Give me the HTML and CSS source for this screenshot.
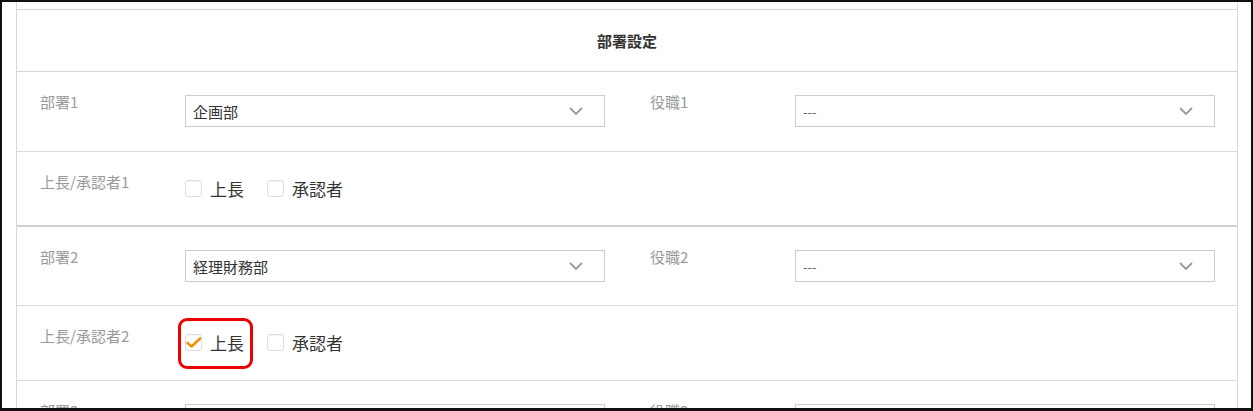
FILE: index.html
```html
<!DOCTYPE html>
<html lang="ja">
<head>
    <meta charset="UTF-8">
    <meta name="viewport" content="width=device-width, initial-scale=1.0">
    <title>部署設定</title>
    <link rel="stylesheet" href="styles.css">
</head>
<body>

    <div class="frame">
        <div class="panel">
            <div class="settings">
                <div class="settings-header">部署設定</div>

                <!-- 部署1 -->
                <div class="row">
                    <div class="pair">
                        <div class="field-label">部署1</div>
                        <div class="select">
                            <span>企画部</span>
                            <svg class="chevron" width="14" height="8" viewBox="0 0 14 8"><polyline points="1,1 7,7 13,1" /></svg>
                        </div>
                    </div>
                    <div class="pair">
                        <div class="field-label">役職1</div>
                        <div class="select">
                            <span class="empty">---</span>
                            <svg class="chevron" width="14" height="8" viewBox="0 0 14 8"><polyline points="1,1 7,7 13,1" /></svg>
                        </div>
                    </div>
                </div>
                <div class="row row-checks group-end">
                    <div class="field-label">上長/承認者1</div>
                    <div class="checks">
                        <label class="check"><span class="box"></span>上長</label>
                        <label class="check"><span class="box"></span>承認者</label>
                    </div>
                </div>

                <!-- 部署2 -->
                <div class="row">
                    <div class="pair">
                        <div class="field-label">部署2</div>
                        <div class="select">
                            <span>経理財務部</span>
                            <svg class="chevron" width="14" height="8" viewBox="0 0 14 8"><polyline points="1,1 7,7 13,1" /></svg>
                        </div>
                    </div>
                    <div class="pair">
                        <div class="field-label">役職2</div>
                        <div class="select">
                            <span class="empty">---</span>
                            <svg class="chevron" width="14" height="8" viewBox="0 0 14 8"><polyline points="1,1 7,7 13,1" /></svg>
                        </div>
                    </div>
                </div>
                <div class="row row-checks">
                    <div class="field-label">上長/承認者2</div>
                    <div class="checks">
                        <label class="check marked">
                            <span class="box checked">
                                <svg width="17" height="17" viewBox="0 0 17 17"><polyline points="2.5,9 6.5,12.5 15,4.5" /></svg>
                            </span>上長
                        </label>
                        <label class="check"><span class="box"></span>承認者</label>
                    </div>
                </div>

                <!-- 部署3 -->
                <div class="row">
                    <div class="pair">
                        <div class="field-label">部署3</div>
                        <div class="select">
                            <span></span>
                        </div>
                    </div>
                    <div class="pair">
                        <div class="field-label">役職3</div>
                        <div class="select">
                            <span></span>
                        </div>
                    </div>
                </div>
            </div>
        </div>
    </div>

</body>
</html>
```

FILE: styles.css
```css
    body {
        font-family: "Noto Sans CJK JP", "Noto Sans", sans-serif;
        margin: 0;
        padding: 0;
        background-color: #ffffff;
        color: #333;
    }

    .frame {
        height: 411px;
        box-sizing: border-box;
        border: 2px solid #111;
        border-bottom-width: 3px;
        overflow: hidden;
        background-color: #ffffff;
    }

    .panel {
        height: 100%;
        margin: 0 13px 0 14px;
        padding-top: 7px;
        box-sizing: border-box;
        border-left: 1px solid #d9d9d9;
        border-right: 1px solid #d9d9d9;
    }

    .settings {
        border-top: 1px solid #d5d5d5;
    }

    .settings-header {
        height: 61px;
        display: flex;
        align-items: center;
        justify-content: center;
        font-size: 15px;
        font-weight: bold;
        color: #333;
        border-bottom: 1px solid #d5d5d5;
    }

    .row {
        display: flex;
        align-items: flex-start;
        gap: 45px;
        padding: 20px 21px 23px 23px;
        border-bottom: 1px solid #dcdcdc;
    }

    .settings-header + .row {
        padding-bottom: 24px;
    }

    .row-checks {
        gap: 0;
        height: 75px;
        box-sizing: border-box;
        padding-bottom: 0;
    }

    .group-end {
        border-bottom: 2px solid #d0d0d0;
    }

    .pair {
        display: flex;
        align-items: flex-start;
    }

    .field-label {
        width: 145px;
        flex-shrink: 0;
        font-size: 15px;
        line-height: 20px;
        color: #999;
    }

    .select {
        width: 420px;
        height: 32px;
        margin-top: 3px;
        box-sizing: border-box;
        display: flex;
        align-items: center;
        justify-content: space-between;
        padding: 0 21px 0 7px;
        border: 1px solid #cccccc;
        font-size: 15px;
        color: #333;
    }

    .select .empty {
        font-size: 13px;
        color: #666;
    }

    .chevron polyline {
        fill: none;
        stroke: #9a9a9a;
        stroke-width: 1.8;
    }

    .checks {
        display: flex;
        align-items: center;
        gap: 23px;
        margin-top: 8px;
    }

    .check {
        position: relative;
        display: flex;
        align-items: center;
        gap: 8px;
        height: 17px;
        font-size: 17px;
        line-height: 17px;
        color: #333;
    }

    .box {
        width: 17px;
        height: 17px;
        box-sizing: border-box;
        border: 1px solid #dedede;
        border-radius: 3px;
        background-color: #fff;
        box-shadow: inset 0 1px 1px rgba(0, 0, 0, 0.04);
    }

    .box.checked svg {
        display: block;
        margin: -1px;
    }

    .box.checked polyline {
        fill: none;
        stroke: #f39200;
        stroke-width: 2.6;
        stroke-linecap: round;
        stroke-linejoin: round;
    }

    /* red note drawn round the checked item */
    .check.marked::after {
        content: "";
        position: absolute;
        left: -7px;
        right: -9px;
        top: -16px;
        bottom: -18px;
        border: 3px solid #ee0000;
        border-radius: 9px;
    }
```
